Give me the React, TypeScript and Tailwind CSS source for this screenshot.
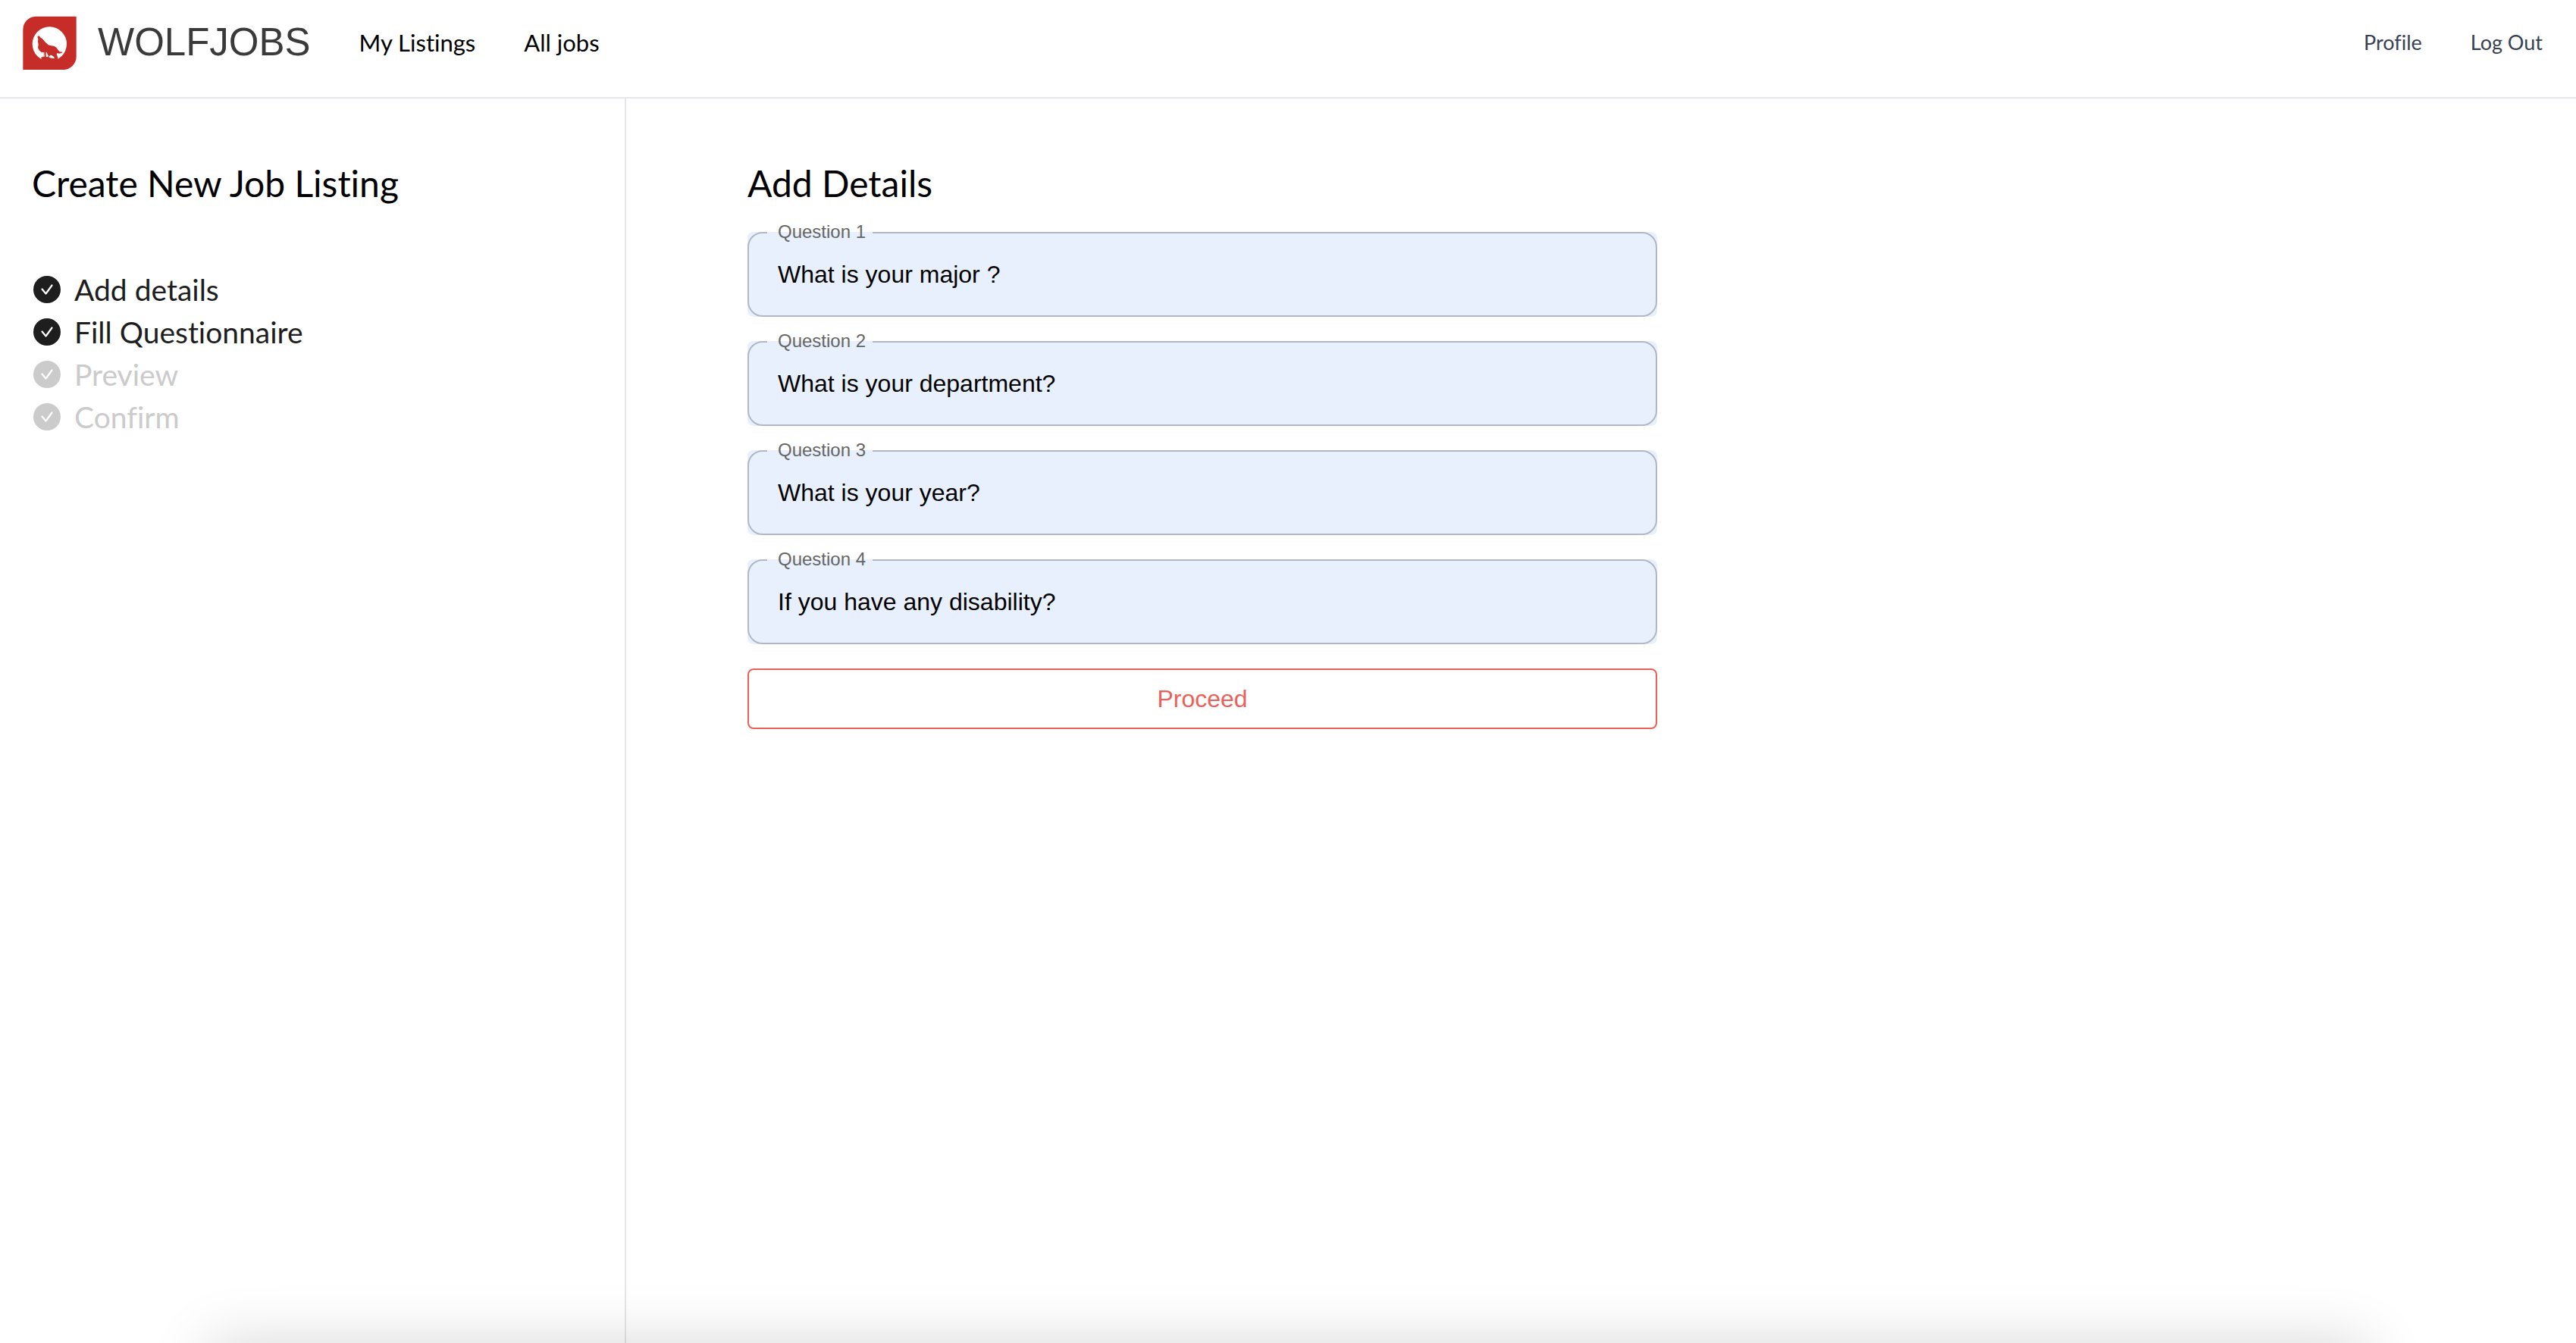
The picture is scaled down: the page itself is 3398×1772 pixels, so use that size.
const steps = [
  { label: "Add details", done: true },
  { label: "Fill Questionnaire", done: true },
  { label: "Preview", done: false },
  { label: "Confirm", done: false },
];

const questions = [
  "What is your major ?",
  "What is your department?",
  "What is your year?",
  "If you have any disability?",
];

function Logo() {
  return (
    <svg viewBox="0 0 213 213" className="size-[71px]" aria-hidden="true">
      <path d="M52 2H212V160A52 52 0 0 1 160 213H1V54A52 52 0 0 1 52 2Z" fill="#c62d28" />
      <circle cx="106" cy="111" r="68" fill="#fff" />
      <path
        d="M58 83 62 79 67 80 69 85 78 91 88 103 101 115 112 118 124 119 133 125 140 135 146 142 158 143 154 147 144 149 137 147 134 151 137 160 140 167 138 172 132 185 80 185 72 165 79 162 82 160 81 144 73 143 65 136 60 126 62 113 60 101 61 90Z"
        fill="#c62d28"
      />
      <path d="M92 144 95 143 98 152 103 160 97 163 92 162Z" fill="#fff" />
      <path d="M82 144 85 143 86 161 82 162Z" fill="#fff" />
      <path d="M109 155 116 156 122 161 127 168 118 168 106 165 103 162Z" fill="#fff" />
    </svg>
  );
}

function StepIcon() {
  return (
    <svg viewBox="0 0 36 36" className="size-9 shrink-0" aria-hidden="true">
      <circle cx="18" cy="18" r="18" fill="currentColor" />
      <path
        d="M11.5 17.5 16.5 23.5 24.5 12.5"
        fill="none"
        stroke="#fff"
        strokeWidth="2.2"
        strokeLinecap="round"
        strokeLinejoin="round"
      />
    </svg>
  );
}

function QuestionField({ index, value }: { index: number; value: string }) {
  const id = `question-${index}`;
  return (
    <div className="relative">
      <input
        id={id}
        type="text"
        defaultValue={value}
        className="block h-28 w-full rounded-lg bg-[#e8f0fe] px-10 text-[32px] text-black outline-none"
      />
      <fieldset
        aria-hidden="true"
        className="pointer-events-none absolute inset-x-0 -top-[10px] bottom-0 rounded-[20px] border-2 border-black/23 px-6"
      >
        <legend className="h-[22px] w-[139px]" />
      </fieldset>
      <label htmlFor={id} className="absolute -top-4 left-10 text-2xl leading-8 text-[#666666]">
        Question {index}
      </label>
    </div>
  );
}

export default function App() {
  return (
    <div className="relative flex min-h-screen flex-col overflow-hidden bg-white font-['Lato',sans-serif] text-black [font-variant-ligatures:none]">
      <header className="flex h-[130px] items-center justify-between border-b-2 border-[#e5e7eb] pr-11 pb-4 pl-[30px]">
        <div className="flex items-center">
          <a href="#home" className="flex items-center gap-7">
            <Logo />
            <span className="font-['Liberation_Sans',sans-serif] text-[51px] leading-[60px] text-[#3a3a3a]">
              WOLFJOBS
            </span>
          </a>
          <nav className="ml-16 flex gap-16 text-[31px] leading-10">
            <a href="#listings">My Listings</a>
            <a href="#jobs">All jobs</a>
          </nav>
        </div>
        <nav className="flex gap-16 text-[27px] leading-10 text-[#374151]">
          <a href="#profile">Profile</a>
          <a href="#logout">Log Out</a>
        </nav>
      </header>

      <div className="flex grow">
        <aside className="w-[826px] shrink-0 border-r-2 border-[#e5e7eb] px-[42px] pt-20">
          <h1 className="text-[48px] leading-[64px]">Create New Job Listing</h1>
          <ol className="mt-20 pl-0.5 text-[39px] leading-[56px]">
            {steps.map((step) => (
              <li
                key={step.label}
                className={`flex items-center gap-[18px] ${step.done ? "text-[#1e1e1e]" : "text-[#cbcbcb]"}`}
              >
                <StepIcon />
                {step.label}
              </li>
            ))}
          </ol>
        </aside>

        <main className="grow px-40 pt-20">
          <h2 className="text-[48px] leading-[64px]">Add Details</h2>
          <form className="mt-8 flex max-w-[1200px] flex-col gap-8 font-['Liberation_Sans',sans-serif]">
            {questions.map((question, i) => (
              <QuestionField key={question} index={i + 1} value={question} />
            ))}
            <button
              type="button"
              className="h-20 rounded-lg border-2 border-[#eb6059] text-[32px] leading-10 text-[#eb6059]"
            >
              Proceed
            </button>
          </form>
        </main>
      </div>

      <div className="pointer-events-none absolute inset-x-[276px] top-full h-40 shadow-[0_0_80px_0_rgba(0,0,0,0.16)]" />
    </div>
  );
}
